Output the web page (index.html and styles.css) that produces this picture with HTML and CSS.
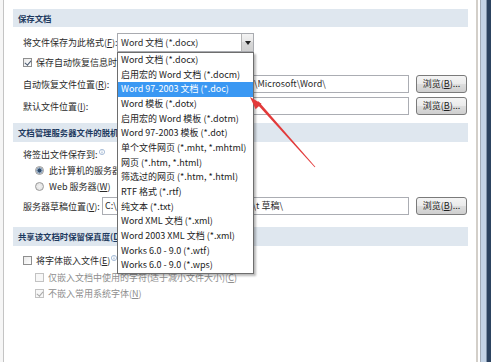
FILE: index.html
```html
<!DOCTYPE html>
<html lang="zh-CN">
<head>
<meta charset="utf-8">
<title>Word 选项 - 保存</title>
<link rel="stylesheet" href="styles.css">
</head>
<body>
<div class="window">
  <div class="left-edge"></div>
  <div class="content">
    <div class="band band-1">保存文档</div>

    <div class="row row-format">
      <span class="label w-format">将文件保存为此格式(<u>F</u>):</span>
      <div class="select">
        <span class="select-text">Word 文档 (*.docx)</span>
        <span class="select-btn"><svg width="6" height="4" viewBox="0 0 6 4"><path d="M0 0H6L3 4Z" fill="#222"/></svg></span>
        <ul class="list">
          <li>Word 文档 (*.docx)</li>
          <li>启用宏的 Word 文档 (*.docm)</li>
          <li class="sel">Word 97-2003 文档 (*.doc)</li>
          <li>Word 模板 (*.dotx)</li>
          <li>启用宏的 Word 模板 (*.dotm)</li>
          <li>Word 97-2003 模板 (*.dot)</li>
          <li>单个文件网页 (*.mht, *.mhtml)</li>
          <li>网页 (*.htm, *.html)</li>
          <li>筛选过的网页 (*.htm, *.html)</li>
          <li>RTF 格式 (*.rtf)</li>
          <li>纯文本 (*.txt)</li>
          <li>Word XML 文档 (*.xml)</li>
          <li>Word 2003 XML 文档 (*.xml)</li>
          <li>Works 6.0 - 9.0 (*.wtf)</li>
          <li>Works 6.0 - 9.0 (*.wps)</li>
        </ul>
      </div>
    </div>

    <div class="row row-autosave">
      <span class="check checked"></span>
      <span class="label">保存自动恢复信息时间间隔(<u>A</u>)</span>
    </div>

    <div class="row row-path first-path">
      <span class="label w-format">自动恢复文件位置(<u>R</u>):</span>
      <div class="input w-path"><span class="hidden-part">C:\Users\Administrator\AppData\Roaming</span>\Microsoft\Word\</div>
      <span class="btn">浏览(<u>B</u>)...</span>
    </div>

    <div class="row row-path second-path">
      <span class="label w-format">默认文件位置(<u>I</u>):</span>
      <div class="input w-path">C:\Users\Documents\</div>
      <span class="btn">浏览(<u>B</u>)...</span>
    </div>

    <div class="band band-2">文档管理服务器文件的脱机编辑选项</div>

    <div class="row row-checkout">
      <span class="label">将签出文件保存到:</span>
      <span class="info"><svg width="6" height="6" viewBox="0 0 6 6"><circle cx="3" cy="3" r="2.6" fill="none" stroke="#86a4c8" stroke-width="0.7"/><rect x="2.65" y="2.5" width="0.7" height="2" fill="#6f90b8"/><rect x="2.65" y="1.4" width="0.7" height="0.6" fill="#6f90b8"/></svg></span>
    </div>

    <div class="row row-sub">
      <span class="radio checked"></span>
      <span class="label">此计算机的服务器草稿位置(<u>L</u>)</span>
    </div>
    <div class="row row-sub">
      <span class="radio"></span>
      <span class="label">Web 服务器(<u>W</u>)</span>
    </div>

    <div class="row row-path row-draft">
      <span class="label w-draft">服务器草稿位置(<u>V</u>):</span>
      <div class="input w-draftinput"><span class="hidden-draft">C:\Users\Administrator\Documents\SharePoin</span>t 草稿\</div>
      <span class="btn">浏览(<u>B</u>)...</span>
    </div>

    <div class="band band-3">共享该文档时保留保真度(<u>D</u>):</div>

    <div class="row row-embed">
      <span class="check"></span>
      <span class="label">将字体嵌入文件(<u>E</u>)</span>
      <span class="info"><svg width="6" height="6" viewBox="0 0 6 6"><circle cx="3" cy="3" r="2.6" fill="none" stroke="#86a4c8" stroke-width="0.7"/><rect x="2.65" y="2.5" width="0.7" height="2" fill="#6f90b8"/><rect x="2.65" y="1.4" width="0.7" height="0.6" fill="#6f90b8"/></svg></span>
    </div>
    <div class="row row-sub2 disabled">
      <span class="check"></span>
      <span class="label">仅嵌入文档中使用的字符(适于减小文件大小)(<u>C</u>)</span>
    </div>
    <div class="row row-sub3 disabled">
      <span class="check checked"></span>
      <span class="label">不嵌入常用系统字体(<u>N</u>)</span>
    </div>
  </div>
  <div class="right-frame"></div>
</div>

<svg class="arrow" width="491" height="362" viewBox="0 0 491 362">
  <polygon points="256.3,103.2 258.4,101.3 315.3,166.7 314.7,167.3" fill="#e23a3a"/>
  <polygon points="250,97 261.5,103.8 255.6,109.2" fill="#e23a3a"/>
</svg>
</body>
</html>
```

FILE: styles.css
```css
* { box-sizing: border-box; }

body {
  margin: 0;
  width: 491px;
  height: 362px;
  overflow: hidden;
  background: #ffffff;
  font-family: "Noto Sans CJK SC", "Noto Sans", sans-serif;
  font-size: 9px;
  color: #2a2a2a;
  position: relative;
}

.window {
  display: flex;
  height: 362px;
}

.left-edge {
  width: 4px;
  background: #f6f6f6;
  border-right: 1px solid #c4c4c4;
}

.content {
  flex: 1;
  padding: 9px 8px 0 9px;
  display: flex;
  flex-direction: column;
}

.right-frame {
  width: 15px;
  background: linear-gradient(to right,
    #d3cfc9 0 2px,
    #ffffff 2px 4px,
    #a2acb8 4px 5px,
    #c4d4e7 5px 10px,
    #8294aa 10px 11px,
    #2c4360 11px 15px);
}

.band {
  height: 18px;
  line-height: 18px;
  padding-left: 5px;
  background: #dfe7ef;
  color: #1e3a60;
  font-weight: bold;
  font-size: 8.4px;
  white-space: nowrap;
  overflow: hidden;
}

.band-2 { margin-top: 8px; height: 19px; line-height: 19px; }
.band-3 { margin-top: 12px; height: 19px; line-height: 19px; }

.row {
  display: flex;
  align-items: center;
  margin-left: 10px;
  white-space: nowrap;
}

.label { display: inline-block; }
.w-format { width: 94px; }
.w-draft { width: 79px; }

.row-format { margin-top: 6px; height: 19px; }
.row-autosave { margin-top: 1px; height: 18px; }
.first-path { margin-top: 4px; height: 18px; }
.second-path { margin-top: 4px; height: 18px; }
.row-checkout { margin-top: 4px; height: 16px; }
.row-sub { height: 16px; margin-left: 22px; }
.row-draft { margin-top: 3px; height: 18px; }
.row-embed { margin-top: 6px; height: 16px; }
.row-sub2 { margin-top: 1px; height: 16px; margin-left: 22px; }
.row-sub3 { height: 16px; margin-left: 22px; }

.select {
  position: relative;
  width: 137px;
  height: 19px;
  border: 1px solid #a9abb0;
  background: #fff;
  display: flex;
  align-items: center;
}

.select-text { padding-left: 3px; flex: 1; }

.select-btn {
  width: 12px;
  height: 17px;
  border-left: 1px solid #b5b5b5;
  background: linear-gradient(#f3f3f3, #e6e6e6 50%, #d8d8d8 50%, #d0d0d0);
  display: flex;
  align-items: center;
  justify-content: center;
}

.list {
  position: absolute;
  top: 18px;
  left: -1px;
  width: 137px;
  margin: 0;
  padding: 0;
  list-style: none;
  background: #fff;
  border: 1px solid #6e6e6e;
  box-shadow: 2px 2px 2px rgba(0, 0, 0, 0.28);
  z-index: 5;
}

.list li {
  height: 14.67px;
  line-height: 14.67px;
  padding-left: 3px;
  color: #222;
  font-size: 9px;
}

.list li.sel {
  background: #3a98f3;
  color: #fff;
}

.check {
  width: 9px;
  height: 9px;
  border: 1px solid #8f8f8f;
  background: linear-gradient(135deg, #e9e9e9, #ffffff);
  margin-right: 4px;
  position: relative;
  flex: none;
}

.check.checked::after {
  content: "";
  position: absolute;
  left: 2px;
  top: 0px;
  width: 2.5px;
  height: 5px;
  border-right: 1.2px solid #4a5a70;
  border-bottom: 1.2px solid #4a5a70;
  transform: rotate(40deg);
}

.radio {
  width: 9px;
  height: 9px;
  border-radius: 50%;
  border: 1px solid #9a9a9a;
  background: radial-gradient(circle, #f2f2f2, #dcdcdc);
  margin-right: 5px;
  position: relative;
  flex: none;
}

.radio.checked {
  background: radial-gradient(circle, #2f4968 0 1.8px, #8fa6bf 2.2px 3px, #e6e6e6 3.3px);
}

.info {
  display: inline-flex;
  margin-left: 1px;
  margin-top: -5px;
}

.input {
  height: 18px;
  border: 1px solid #abadb3;
  background: #fff;
  line-height: 16px;
  padding-left: 2px;
  overflow: hidden;
}

.w-path { width: 292px; }
.w-draftinput { width: 307px; }

.hidden-part {
  display: inline-block;
  width: 134px;
  overflow: hidden;
  vertical-align: top;
}

.hidden-draft {
  display: inline-block;
  width: 151px;
  overflow: hidden;
  vertical-align: top;
}

.btn {
  margin-left: 7px;
  width: 51px;
  height: 18px;
  border: 1px solid #7a7a7a;
  border-radius: 3px;
  background: linear-gradient(#f4f4f4, #ebebeb 48%, #dddddd 52%, #cfcfcf);
  text-align: center;
  line-height: 16px;
  color: #222;
}

.disabled { color: #8e8e8e; }
.disabled .check { border-color: #c2c2c2; background: #f7f7f7; }
.disabled .check.checked::after { border-color: #a8a8a8; }

.arrow {
  position: absolute;
  left: 0;
  top: 0;
  pointer-events: none;
  z-index: 10;
}
```
